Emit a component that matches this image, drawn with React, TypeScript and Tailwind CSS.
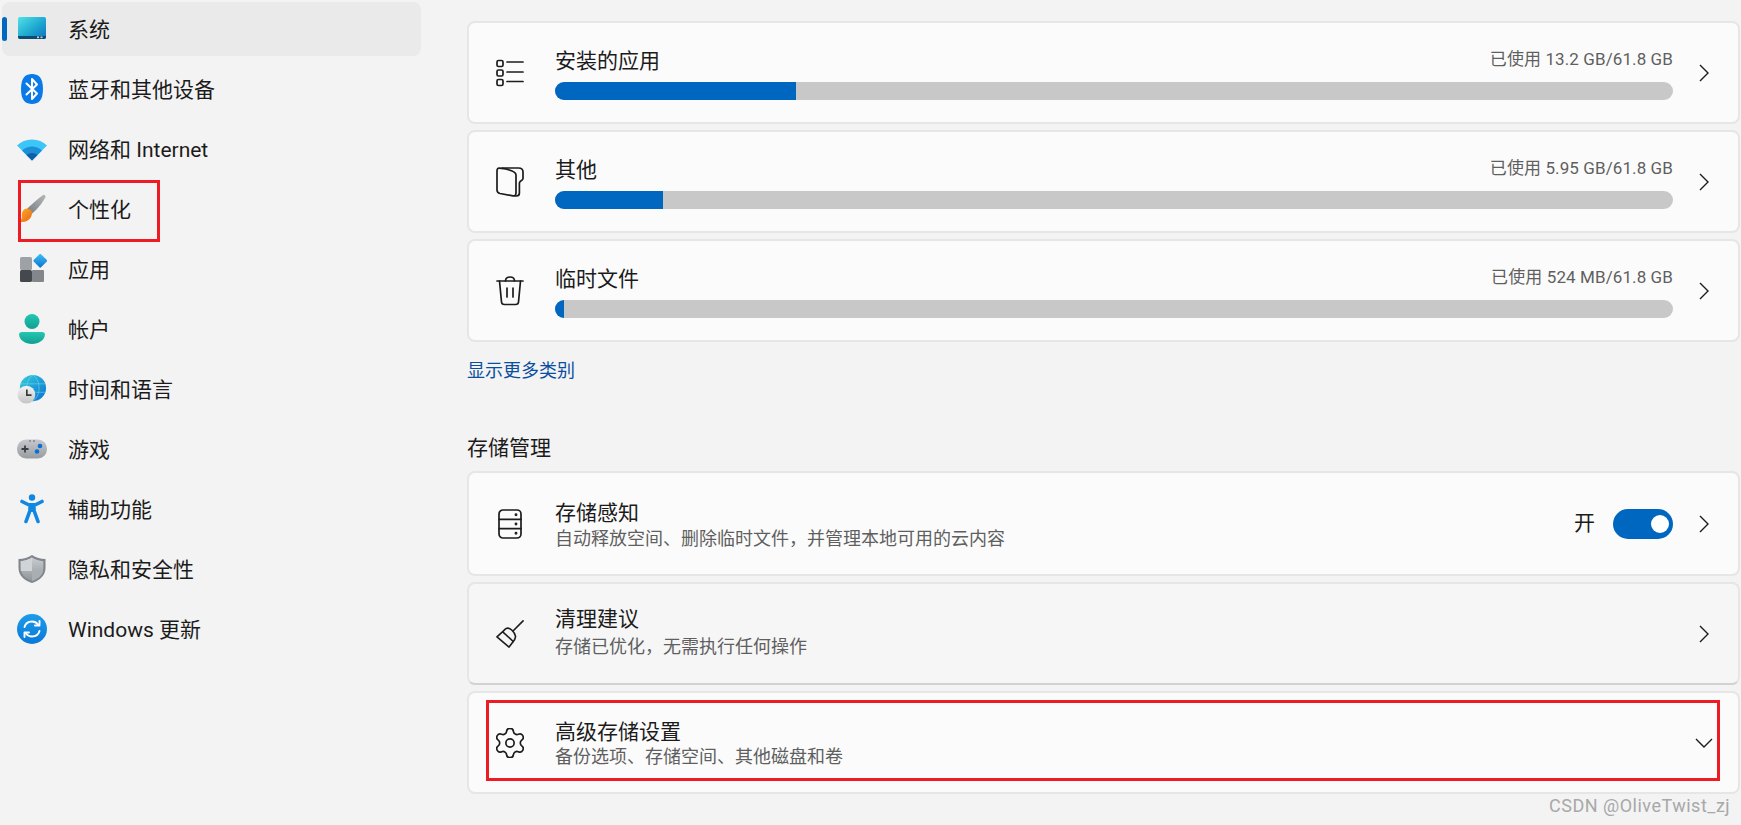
import React from "react";

const Sys = () => (
  <svg width="30" height="30" viewBox="0 0 30 30">
    <defs>
      <linearGradient id="sysg" x1="0" y1="0" x2="1" y2="1">
        <stop offset="0" stopColor="#4fe3e6" />
        <stop offset="0.55" stopColor="#1ea7d0" />
        <stop offset="1" stopColor="#0f6fc0" />
      </linearGradient>
    </defs>
    <rect x="1" y="3" width="28" height="22" rx="2" fill="url(#sysg)" />
    <path d="M1 22h28v1a2 2 0 0 1-2 2H3a2 2 0 0 1-2-2z" fill="#0f4a70" />
    <rect x="20" y="22.5" width="2" height="1.6" fill="#b9dbe8" />
    <rect x="23.5" y="22.5" width="2" height="1.6" fill="#b9dbe8" />
  </svg>
);
const Bt = () => (
  <svg width="30" height="30" viewBox="0 0 30 30">
    <path d="M15 0C21 0 26 3 26 15S21 30 15 30 4 27 4 15 9 0 15 0z" fill="#0a7ae8" />
    <path d="M9.5 9.5 20 19.5 15 25V5l5 5.5L9.5 20.5" fill="none" stroke="#fff" strokeWidth="2" strokeLinejoin="round" strokeLinecap="round" />
  </svg>
);
const Wifi = () => (
  <svg width="30" height="30" viewBox="0 0 30 30">
    <path d="M0 11.5C4 7.500 9 5.500 15 5.500s11 2 15 6l-15 15z" fill="#3cc6f7" />
    <path d="M5 16.500C8 14 11.300 12.500 15 12.500s7 1.500 10 4l-10 10z" fill="#1b8fd8" />
    <path d="M9.500 21c1.600-1.300 3.400-2 5.500-2s3.900.7 5.500 2L15 26.500z" fill="#0f5fa8" />
  </svg>
);
const Brush = () => (
  <svg width="30" height="30" viewBox="0 0 30 30">
    <defs>
      <linearGradient id="brg" x1="0" y1="1" x2="1" y2="0">
        <stop offset="0" stopColor="#6f7478" />
        <stop offset="1" stopColor="#b4b8bb" />
      </linearGradient>
      <linearGradient id="bro" x1="0" y1="0" x2="1" y2="1">
        <stop offset="0" stopColor="#ffb01f" />
        <stop offset="1" stopColor="#e9641a" />
      </linearGradient>
    </defs>
    <path d="M26 1c1.500-.7 3 .8 2.400 2.300C25 10 19 17 11.500 22.500L8 17C13 12 19 6 26 1z" fill="url(#brg)" />
    <path d="M8 15c2.500-.9 5 0 6.200 1.500 1.300 1.800 1 4.500-.5 7-1.500 2.500-5 4.500-8.500 4.500-1.500 0-3-.3-3.500-.7 2.500-.3 2.800-1.600 3.200-4.800C4.700 19.500 5.500 16 8 15z" fill="url(#bro)" />
  </svg>
);
const Apps = () => (
  <svg width="30" height="30" viewBox="0 0 30 30">
    <defs>
      <linearGradient id="apg" x1="0" y1="0" x2="1" y2="1">
        <stop offset="0" stopColor="#3fc3f6" />
        <stop offset="1" stopColor="#0b6fd0" />
      </linearGradient>
    </defs>
    <rect x="3" y="3" width="12" height="13" rx="1.500" fill="#9ea1a5" />
    <rect x="3" y="16" width="12" height="12" rx="1.500" fill="#45484c" />
    <rect x="15" y="16" width="12" height="12" rx="1" fill="#83878b" />
    <rect x="18" y="1.500" width="10.500" height="10.500" rx="1.500" transform="rotate(45 23.250 6.750)" fill="url(#apg)" />
  </svg>
);
const Acct = () => (
  <svg width="30" height="30" viewBox="0 0 30 30">
    <defs>
      <linearGradient id="acg" x1="0" y1="0" x2="0" y2="1">
        <stop offset="0" stopColor="#25c7b1" />
        <stop offset="1" stopColor="#0f9f90" />
      </linearGradient>
    </defs>
    <circle cx="15" cy="7.500" r="7.500" fill="url(#acg)" />
    <path d="M5 18h20c2 0 2.900 1 2.900 2.500C27.900 26 21.500 30 15 30S2.100 26 2.100 20.500C2.100 19 3 18 5 18z" fill="url(#acg)" />
  </svg>
);
const Globe = () => (
  <svg width="32" height="32" viewBox="0 0 32 32">
    <defs>
      <linearGradient id="glg" x1="0" y1="0" x2="1" y2="1">
        <stop offset="0" stopColor="#35d0de" />
        <stop offset="1" stopColor="#0a6fd0" />
      </linearGradient>
      <linearGradient id="clg" x1="0" y1="0" x2="0" y2="1">
        <stop offset="0" stopColor="#f4f4f4" />
        <stop offset="1" stopColor="#c4c4c4" />
      </linearGradient>
    </defs>
    <circle cx="17" cy="15" r="14" fill="url(#glg)" />
    <path d="M4 10.500h26M4 19.500h26M17 1c-5 4-6.500 8.500-6.500 14S12 25 17 29c5-4 6.500-8.500 6.500-14S22 5 17 1z" fill="none" stroke="#7fe0ea" strokeOpacity=".55" strokeWidth="1" />
    <circle cx="10" cy="22" r="9.500" fill="url(#clg)" />
    <path d="M10.500 16.500V22.500H15.500" fill="none" stroke="#3a3a3a" strokeWidth="1.800" />
  </svg>
);
const Game = () => (
  <svg width="30" height="30" viewBox="0 0 30 30">
    <defs>
      <linearGradient id="gag" x1="0" y1="0" x2="0" y2="1">
        <stop offset="0" stopColor="#c5c9cd" />
        <stop offset="1" stopColor="#989da2" />
      </linearGradient>
    </defs>
    <rect x="0" y="5.500" width="30" height="19" rx="9" fill="url(#gag)" />
    <path d="M8 11.500v7M4.500 15h7" stroke="#3c3f42" strokeWidth="1.800" />
    <circle cx="23" cy="12" r="2.300" fill="#0a6fd8" />
    <circle cx="20" cy="17.500" r="2.300" fill="#0a6fd8" />
    <circle cx="13" cy="7" r=".8" fill="#55585b" />
    <circle cx="17" cy="7" r=".8" fill="#55585b" />
  </svg>
);
const Access = () => (
  <svg width="30" height="30" viewBox="0 0 30 30">
    <circle cx="15" cy="3.500" r="3.200" fill="#1287e2" />
    <path d="M5 7.500 13 11.500v5L9 27.500" fill="none" stroke="#1287e2" strokeWidth="3.600" strokeLinecap="round" strokeLinejoin="round" />
    <path d="M25 7.500 17 11.500v5L21 27.500" fill="none" stroke="#1287e2" strokeWidth="3.600" strokeLinecap="round" strokeLinejoin="round" />
    <rect x="12" y="9" width="6" height="9" fill="#1287e2" />
  </svg>
);
const Shield = () => (
  <svg width="30" height="30" viewBox="0 0 30 30">
    <defs>
      <linearGradient id="shg" x1="0" y1="0" x2="0" y2="1">
        <stop offset="0" stopColor="#c9cdd1" />
        <stop offset="1" stopColor="#8f9599" />
      </linearGradient>
    </defs>
    <path d="M15 1c4 2.700 8.500 4 13.500 4v9c0 7.500-6 12.700-13.500 15C7.500 26.700 1.500 21.500 1.500 14V5C6.500 5 11 3.700 15 1z" fill="#80868b" />
    <path d="M15 3.500c3.500 2.300 7.300 3.400 11.300 3.700v7c0 6.300-5 10.500-11.300 12.800C8.700 24.700 3.700 20.500 3.700 14.200v-7C7.700 6.900 11.500 5.800 15 3.500z" fill="url(#shg)" />
    <path d="M15 3.500v13.500H3.800c.1-.9-.1-8.800-.1-9.800C7.700 6.900 11.500 5.800 15 3.500z" fill="#d0d4d7" />
    <path d="M15 17h11c-1 5-5.500 8-11 10z" fill="#a9aeb2" />
  </svg>
);
const Update = () => (
  <svg width="30" height="30" viewBox="0 0 30 30">
    <defs>
      <linearGradient id="upg" x1="0" y1="0" x2="0" y2="1">
        <stop offset="0" stopColor="#1c9cea" />
        <stop offset="1" stopColor="#0a78d8" />
      </linearGradient>
    </defs>
    <circle cx="15" cy="15" r="15" fill="url(#upg)" />
    <path d="M7.500 13C8.500 9.500 11.500 7.500 15 7.500c2.600 0 4.600 1 6 3" fill="none" stroke="#fff" strokeWidth="1.900" strokeLinecap="round" />
    <path d="M22.500 7v4.500H18" fill="none" stroke="#fff" strokeWidth="1.900" strokeLinecap="round" strokeLinejoin="round" />
    <path d="M22.500 17c-1 3.500-4 5.500-7.500 5.500-2.600 0-4.600-1-6-3" fill="none" stroke="#fff" strokeWidth="1.900" strokeLinecap="round" />
    <path d="M7.500 23v-4.500H12" fill="none" stroke="#fff" strokeWidth="1.900" strokeLinecap="round" strokeLinejoin="round" />
  </svg>
);

const line = { fill: "none", stroke: "#1c1c1c", strokeWidth: 1.7, strokeLinecap: "round", strokeLinejoin: "round" } as const;

const ListI = () => (
  <svg width="28" height="28" viewBox="0 0 28 28" {...line}>
    <rect x="1" y="1.500" width="6" height="6" rx="1.500" />
    <rect x="1" y="11" width="6" height="6" rx="1.500" />
    <rect x="1" y="20.500" width="6" height="6" rx="1.500" />
    <path d="M11 3h16M11 13h16M11 22.500h16" />
  </svg>
);
const OtherI = () => (
  <svg width="28" height="30" viewBox="0 0 28 30" {...line}>
    <path d="M6 1h16.500C25.500 1 27 2.500 27 5v6.500c0 1.300-1 1.700-2.500 2.700-.7.500-1.100 1-1.100 2V26c0 1.800-1.200 3-3 3h-1.400" />
    <path d="M3.500 1.200C11 2 20 3.500 20 8v18c0 2.500-1.500 3-3 2.800L4 26.500C2 26 1 25 1 23V4c0-2 .7-3 2.500-2.800z" />
  </svg>
);
const TrashI = () => (
  <svg width="28" height="30" viewBox="0 0 28 30" {...line}>
    <path d="M1 5h26" />
    <path d="M9.500 5c0-2.800 2-4 4.500-4s4.500 1.200 4.500 4" />
    <path d="M3.500 5 5.500 26c.2 1.800 1.200 2.500 2.800 2.500h11.400c1.600 0 2.600-.7 2.800-2.500L24.500 5" />
    <path d="M11 12v9M17 12v9" />
  </svg>
);
const DiskI = () => (
  <svg width="28" height="30" viewBox="0 0 28 30" {...line}>
    <rect x="3" y="1" width="22" height="28" rx="4" />
    <path d="M3 10.300h22M3 19.700h22" />
    <circle cx="20" cy="5.700" r=".6" fill="#1c1c1c" />
    <circle cx="20" cy="15" r=".6" fill="#1c1c1c" />
    <circle cx="20" cy="24.300" r=".6" fill="#1c1c1c" />
  </svg>
);
const BroomI = () => (
  <svg width="30" height="30" viewBox="0 0 30 30" {...line}>
    <path d="M29 1 18.500 11.500" />
    <path d="M11 9c4-1.500 9 4 10 8.500-.3 2-1 3.800-2.500 5.500L14 29 1 18l5-4.500C8 11.800 9.500 10 11 9z" />
    <path d="M7.500 13 18.500 23" />
  </svg>
);
const GearI = () => (
  <svg width="30" height="30" viewBox="2.500 2.500 19 19" fill="none" stroke="#1c1c1c" strokeWidth="1.150" strokeLinecap="round" strokeLinejoin="round">
    <path d="M9.671 4.136a2.340 2.340 0 0 1 4.659 0 2.340 2.340 0 0 0 3.319 1.915 2.340 2.340 0 0 1 2.330 4.033 2.340 2.340 0 0 0 0 3.831 2.340 2.340 0 0 1-2.330 4.033 2.340 2.340 0 0 0-3.319 1.915 2.340 2.340 0 0 1-4.659 0 2.340 2.340 0 0 0-3.320-1.915 2.340 2.340 0 0 1-2.330-4.033 2.340 2.340 0 0 0 0-3.831A2.340 2.340 0 0 1 6.350 6.051a2.340 2.340 0 0 0 3.319-1.915" />
    <circle cx="12" cy="12" r="2.800" />
  </svg>
);
const Chev = () => (
  <svg width="10" height="18" viewBox="0 0 10 18" className="ml-[26px] shrink-0" fill="none" stroke="#1c1c1c" strokeWidth="1.400">
    <path d="M1 1l8 8-8 8" />
  </svg>
);
const ChevDown = () => (
  <svg width="18" height="10" viewBox="0 0 18 10" className="-mr-[4px] ml-[22px] shrink-0" fill="none" stroke="#1c1c1c" strokeWidth="1.400">
    <path d="M1 1l8 8 8-8" />
  </svg>
);

const nav = [
  { label: "系统", icon: <Sys />, active: true },
  { label: "蓝牙和其他设备", icon: <Bt /> },
  { label: "网络和 Internet", icon: <Wifi /> },
  { label: "个性化", icon: <Brush /> },
  { label: "应用", icon: <Apps /> },
  { label: "帐户", icon: <Acct /> },
  { label: "时间和语言", icon: <Globe /> },
  { label: "游戏", icon: <Game /> },
  { label: "辅助功能", icon: <Access /> },
  { label: "隐私和安全性", icon: <Shield /> },
  { label: "Windows 更新", icon: <Update /> },
];

const usage = [
  { title: "安装的应用", used: "已使用 13.2 GB/61.8 GB", fill: 241, icon: <ListI /> },
  { title: "其他", used: "已使用 5.95 GB/61.8 GB", fill: 108, icon: <OtherI /> },
  { title: "临时文件", used: "已使用 524 MB/61.8 GB", fill: 9, icon: <TrashI /> },
];

export default function App() {
  return (
    <div className="relative flex h-[825px] w-[1741px] overflow-hidden bg-[#f3f3f3] font-['Roboto','Noto_Sans_CJK_SC',sans-serif] text-[#1b1b1b]">
      <nav className="flex w-[467px] shrink-0 flex-col gap-[6px] pl-[2px] pt-[2px]">
        {nav.map((n) => (
          <div
            key={n.label}
            className={`relative flex h-[54px] w-[419px] items-center gap-[21px] rounded-[8px] pl-[15px] text-[21px] ${n.active ? "bg-[#eaeaea]" : ""}`}
          >
            {n.active && <span className="absolute left-0 top-[15px] h-[24px] w-[5px] rounded-full bg-[#0067c0]" />}
            <span className="flex h-[30px] w-[30px] shrink-0 items-center justify-center">{n.icon}</span>
            <span className="pt-[4px]">{n.label}</span>
          </div>
        ))}
      </nav>

      <main className="flex w-[1273px] flex-col pt-[21px]">
        <div className="flex flex-col gap-[6px]">
          {usage.map((u) => (
            <section key={u.title} className="flex h-[103px] items-center rounded-[8px] border-2 border-[#e6e6e6] bg-[#fbfbfb] pl-[27px] pr-[29px]">
              <span className="flex h-[30px] w-[28px] shrink-0 items-center justify-center">{u.icon}</span>
              <div className="ml-[31px] flex min-w-0 flex-1 flex-col pt-[2px]">
                <div className="flex h-[26px] items-start justify-between">
                  <span className="text-[21px] leading-[26px]">{u.title}</span>
                  <span className="text-[17px] leading-[22px] tracking-[0.1px] text-[#5f5f5f]">{u.used}</span>
                </div>
                <div className="mt-[8px] h-[18px] overflow-hidden rounded-[9px] bg-[#c8c8c8]">
                  <div className="h-full bg-[#0067c0]" style={{ width: u.fill }} />
                </div>
              </div>
              <Chev />
            </section>
          ))}
        </div>

        <a className="mt-[17px] block h-[24px] text-[18px] leading-[24px] text-[#0a4f9f]">显示更多类别</a>
        <h2 className="mt-[51px] h-[28px] text-[21px] font-normal leading-[28px]">存储管理</h2>

        <div className="mt-[9px] flex flex-col">
          <section className="flex h-[105px] items-center rounded-[8px] border-2 border-[#e6e6e6] bg-[#fbfbfb] pl-[27px] pr-[29px]">
            <span className="flex h-[30px] w-[28px] shrink-0 items-center justify-center"><DiskI /></span>
            <div className="ml-[31px] flex min-w-0 flex-1 flex-col pt-[3px]">
              <span className="text-[21px] leading-[26px]">存储感知</span>
              <span className="text-[18px] leading-[25px] text-[#5f5f5f]">自动释放空间、删除临时文件，并管理本地可用的云内容</span>
            </div>
            <span className="text-[21px]">开</span>
            <span className="relative ml-[18px] h-[30px] w-[60px] shrink-0 rounded-full bg-[#0067c0]">
              <span className="absolute right-[4px] top-[6px] h-[18px] w-[18px] rounded-full bg-white" />
            </span>
            <Chev />
          </section>

          <section className="mt-[6px] flex h-[103px] items-center rounded-[8px] border-2 border-[#e6e6e6] border-b-[#d2d2d2] bg-[#f6f6f6] pl-[27px] pr-[29px]">
            <span className="flex h-[30px] w-[28px] shrink-0 items-center justify-center"><BroomI /></span>
            <div className="ml-[31px] flex min-w-0 flex-1 flex-col pb-[4px]">
              <span className="text-[21px] leading-[30px]">清理建议</span>
              <span className="text-[18px] leading-[26px] text-[#5f5f5f]">存储已优化，无需执行任何操作</span>
            </div>
            <Chev />
          </section>

          <section className="mt-[6px] flex h-[103px] items-center rounded-[8px] border-2 border-[#e6e6e6] bg-[#fbfbfb] pl-[27px] pr-[29px]">
            <span className="flex h-[30px] w-[28px] shrink-0 items-center justify-center"><GearI /></span>
            <div className="ml-[31px] flex min-w-0 flex-1 flex-col pt-[2px]">
              <span className="text-[21px] leading-[26px]">高级存储设置</span>
              <span className="text-[18px] leading-[24px] text-[#5f5f5f]">备份选项、存储空间、其他磁盘和卷</span>
            </div>
            <ChevDown />
          </section>
        </div>
      </main>

      <div className="pointer-events-none absolute left-[18px] top-[180px] h-[62px] w-[142px] border-[3px] border-[#ed1c24]" />
      <div className="pointer-events-none absolute left-[486px] top-[700px] h-[81px] w-[1234px] border-[3px] border-[#ed1c24]" />
      <span className="absolute left-[1549px] top-[794px] text-[18px] leading-[24px] tracking-[0.5px] text-[#a8a8a8]">CSDN @OliveTwist_zj</span>
    </div>
  );
}
